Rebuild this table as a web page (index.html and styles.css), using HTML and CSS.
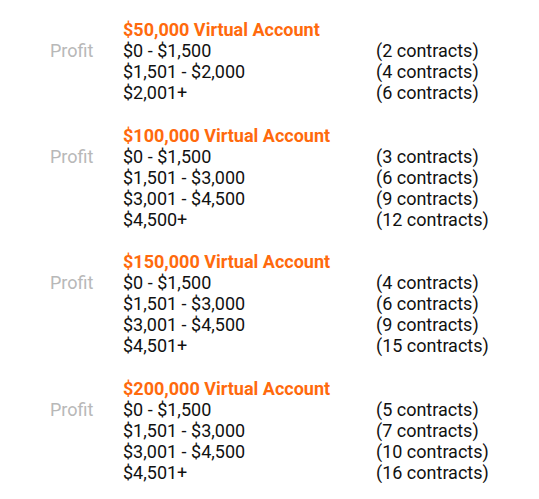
FILE: index.html
```html
<!DOCTYPE html>
<html>
<head>
<meta charset="utf-8">
<link rel="stylesheet" href="styles.css">
</head>
<body>
<div class="plans">
  <section class="plan">
    <div class="title">$50,000 Virtual Account</div>
    <div class="label">Profit</div>
    <div class="rows">
      <div class="range">$0 - $1,500</div><div class="qty">(2 contracts)</div>
      <div class="range">$1,501 - $2,000</div><div class="qty">(4 contracts)</div>
      <div class="range">$2,001+</div><div class="qty">(6 contracts)</div>
    </div>
  </section>
  <section class="plan">
    <div class="title">$100,000 Virtual Account</div>
    <div class="label">Profit</div>
    <div class="rows">
      <div class="range">$0 - $1,500</div><div class="qty">(3 contracts)</div>
      <div class="range">$1,501 - $3,000</div><div class="qty">(6 contracts)</div>
      <div class="range">$3,001 - $4,500</div><div class="qty">(9 contracts)</div>
      <div class="range">$4,500+</div><div class="qty">(12 contracts)</div>
    </div>
  </section>
  <section class="plan">
    <div class="title">$150,000 Virtual Account</div>
    <div class="label">Profit</div>
    <div class="rows">
      <div class="range">$0 - $1,500</div><div class="qty">(4 contracts)</div>
      <div class="range">$1,501 - $3,000</div><div class="qty">(6 contracts)</div>
      <div class="range">$3,001 - $4,500</div><div class="qty">(9 contracts)</div>
      <div class="range">$4,501+</div><div class="qty">(15 contracts)</div>
    </div>
  </section>
  <section class="plan">
    <div class="title">$200,000 Virtual Account</div>
    <div class="label">Profit</div>
    <div class="rows">
      <div class="range">$0 - $1,500</div><div class="qty">(5 contracts)</div>
      <div class="range">$1,501 - $3,000</div><div class="qty">(7 contracts)</div>
      <div class="range">$3,001 - $4,500</div><div class="qty">(10 contracts)</div>
      <div class="range">$4,501+</div><div class="qty">(16 contracts)</div>
    </div>
  </section>
</div>
</body>
</html>
```
FILE: styles.css
```css
html, body {
  margin: 0;
  padding: 0;
  background: #fff;
}
body {
  font-family: Roboto, "Liberation Sans", sans-serif;
  font-size: 18px;
  line-height: 21px;
  color: #111;
}
.plans {
  padding: 19px 0 0 50px;
  display: flex;
  flex-direction: column;
  gap: 21.5px;
}
.plan {
  display: grid;
  grid-template-columns: 73px 1fr;
}
.title {
  grid-column: 2;
  color: #ff6a0d;
  font-weight: 700;
}
.label {
  grid-column: 1;
  color: #b8b8b8;
}
.rows {
  grid-column: 2;
  display: grid;
  grid-template-columns: 253px auto;
}
```
